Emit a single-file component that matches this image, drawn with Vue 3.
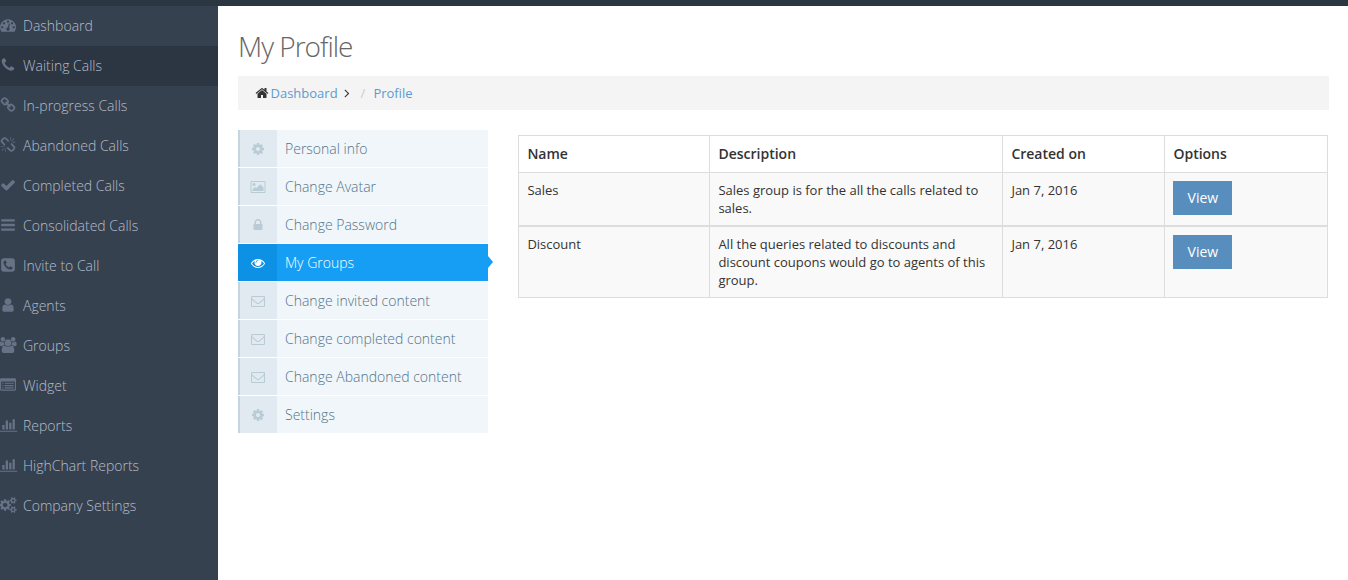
<script setup>
const icons = {
  dashboard: 'M384 1152q0-53-37.5-90.5t-90.5-37.5-90.5 37.5-37.5 90.5 37.5 90.5 90.5 37.5 90.5-37.5 37.5-90.5zm192-448q0-53-37.5-90.5t-90.5-37.5-90.5 37.5-37.5 90.5 37.5 90.5 90.5 37.5 90.5-37.5 37.5-90.5zm428 481l101-382q6-26-7.5-48.5t-38.5-29.5-48 6.5-30 39.5l-101 382q-60 5-107 43.5t-63 98.5q-20 77 20 146t117 89 146-20 89-117q16-60-6-117t-72-91zm660-33q0-53-37.5-90.5t-90.5-37.5-90.5 37.5-37.5 90.5 37.5 90.5 90.5 37.5 90.5-37.5 37.5-90.5zm-640-640q0-53-37.5-90.5t-90.5-37.5-90.5 37.5-37.5 90.5 37.5 90.5 90.5 37.5 90.5-37.5 37.5-90.5zm448 192q0-53-37.5-90.5t-90.5-37.5-90.5 37.5-37.5 90.5 37.5 90.5 90.5 37.5 90.5-37.5 37.5-90.5zm320 448q0 261-141 483-19 29-54 29h-1402q-35 0-54-29-141-221-141-483 0-182 71-348t191-286 286-191 348-71 348 71 286 191 191 286 71 348z',
  phone: 'M1600 1240q0 27-10 70.5t-21 68.5q-21 50-122 106-94 51-186 51-27 0-53-3.5t-57.5-12.5-47-14.5-55.5-20.5-49-18q-98-35-175-83-127-79-264-216t-216-264q-48-77-83-175-3-9-18-49t-20.5-55.5-14.5-47-12.5-57.5-3.5-53q0-92 51-186 56-101 106-122 25-11 68.5-21t70.5-10q14 0 21 3 18 6 53 76 11 19 30 54t35 63.5 31 53.5q3 4 17.5 25t21.5 35.5 7 28.5q0 20-28.5 50t-62 55-62 53-28.5 46q0 9 5 22.5t8.5 20.5 14 24 11.5 19q76 137 174 235t235 174q2 1 19 11.5t24 14 20.5 8.5 22.5 5q18 0 46-28.5t53-62 55-62 50-28.5q14 0 28.5 7t35.5 21.5 25 17.5q25 15 53.5 31t63.5 35 54 30q70 35 76 53 3 7 3 21z',
  chain: 'M1520 1216q0-40-28-68l-208-208q-28-28-68-28-42 0-72 32 3 3 19 18.5t21.5 21.5 15 19 13 25.5 3.5 27.5q0 40-28 68t-68 28q-15 0-27.5-3.5t-25.5-13-19-15-21.5-21.5-18.5-19q-33 31-33 73 0 40 28 68l206 207q27 27 68 27 40 0 68-26l147-146q28-28 28-67zm-703-705q0-40-28-68l-206-207q-28-28-68-28-39 0-68 27l-147 146q-28 28-28 67 0 40 28 68l208 208q27 27 68 27 42 0 72-31-3-3-19-18.5t-21.5-21.5-15-19-13-25.5-3.5-27.5q0-40 28-68t68-28q15 0 27.5 3.5t25.5 13 19 15 21.5 21.5 18.5 19q33-31 33-73zm895 705q0 120-85 203l-147 146q-83 83-203 83-121 0-204-85l-206-207q-83-83-83-203 0-123 88-209l-88-88q-86 88-208 88-120 0-204-84l-208-208q-84-84-84-204t85-203l147-146q83-83 203-83 121 0 204 85l206 207q83 83 83 203 0 123-88 209l88 88q86-88 208-88 120 0 204 84l208 208q84 84 84 204z',
  broken: 'M503 1271l-256 256q-10 9-23 9-12 0-23-9-9-10-9-23t9-23l256-256q10-9 23-9t23 9q9 10 9 23t-9 23zm169 41v320q0 14-9 23t-23 9-23-9-9-23v-320q0-14 9-23t23-9 23 9 9 23zm-224-224q0 14-9 23t-23 9h-320q-14 0-23-9t-9-23 9-23 23-9h320q14 0 23 9t9 23zm1264 128q0 120-85 203l-147 146q-83 83-203 83-121 0-204-85l-334-335q-21-21-42-56l239-18 273 274q28 28 68 28t68-27l147-146q28-28 28-67 0-40-28-68l-274-275 18-239q35 21 56 42l336 336q84 86 84 204zm-617-724l-239 18-273-274q-28-28-68-28-39 0-68 27l-147 146q-28 28-28 67 0 40 28 68l274 274-18 240q-35-21-56-42l-336-336q-84-86-84-204 0-120 85-203l147-146q83-83 203-83 121 0 204 85l334 335q21 21 42 56zm633 84q0 14-9 23t-23 9h-320q-14 0-23-9t-9-23 9-23 23-9h320q14 0 23 9t9 23zm-544-544v320q0 14-9 23t-23 9-23-9-9-23v-320q0-14 9-23t23-9 23 9 9 23zm407 151l-256 256q-11 9-23 9t-23-9q-9-10-9-23t9-23l256-256q10-9 23-9t23 9q9 10 9 23t-9 23z',
  check: 'M1671 566q0 40-28 68l-724 724-136 136q-28 28-68 28t-68-28l-136-136-362-362q-28-28-28-68t28-68l136-136q28-28 68-28t68 28l294 295 656-657q28-28 68-28t68 28l136 136q28 28 28 68z',
  bars: 'M1664 1344v128q0 26-19 45t-45 19h-1408q-26 0-45-19t-19-45v-128q0-26 19-45t45-19h1408q26 0 45 19t19 45zm0-512v128q0 26-19 45t-45 19h-1408q-26 0-45-19t-19-45v-128q0-26 19-45t45-19h1408q26 0 45 19t19 45zm0-512v128q0 26-19 45t-45 19h-1408q-26 0-45-19t-19-45v-128q0-26 19-45t45-19h1408q26 0 45 19t19 45z',
  phoneSquare: 'M1408 1193q0-11-2-16t-18-16.5-40.5-25-47.5-26.5-45.5-25-28.5-15q-5-3-19-13t-25-15-21-5q-15 0-36.5 20.5t-39.5 45-38.5 45-33.5 20.5q-7 0-16.5-3.5t-15.5-6.5-17-9.5-14-8.5q-99-55-170-126.5t-127-170.5q-2-3-8.5-14t-9.5-17-6.5-15.5-3.5-16.5q0-13 20.5-33.5t45-38.5 45-39.5 20.5-36.5q0-10-5-21t-15-25-13-19q-3-6-15-28.5t-25-45.5-26.5-47.5-25-40.5-16.5-18-16-2q-48 0-101 22-46 21-80 94.5t-34 130.5q0 16 2.5 34t5 30.5 9 33 10 29.5 12.5 33 11 30q60 164 216.5 320.5t320.5 216.5q6 2 30 11t33 12.5 29.5 10 33 9 30.5 5 34 2.5q57 0 130.5-34t94.5-80q22-53 22-101zm256-777v960q0 119-84.5 203.5t-203.5 84.5h-960q-119 0-203.5-84.5t-84.5-203.5v-960q0-119 84.5-203.5t203.5-84.5h960q119 0 203.5 84.5t84.5 203.5z',
  user: 'M1536 1399q0 109-62.5 187t-150.5 78h-854q-88 0-150.5-78t-62.5-187q0-85 8.5-160.5t31.5-152 58.5-131 94-89 134.5-34.5q131 128 313 128t313-128q76 0 134.5 34.5t94 89 58.5 131 31.5 152 8.5 160.5zm-256-887q0 159-112.5 271.5t-271.5 112.5-271.5-112.5-112.5-271.5 112.5-271.5 271.5-112.5 271.5 112.5 112.5 271.5z',
  users: 'M529 896q-162 5-265 128h-134q-82 0-138-40.5t-56-118.5q0-353 124-353 6 0 43.5 21t97.5 42.5 119 21.5q67 0 133-23-5 37-5 66 0 159 90 256zm1071 637q0 120-73 189.5t-194 69.5h-874q-121 0-194-69.5t-73-189.5q0-53 3.5-103.5t14-109 26.5-108.5 43-97.5 62-81 85.5-53.5 111.5-20q10 0 43 21.5t73 48 107 48 135 21.5 135-21.5 107-48 73-48 43-21.5q61 0 111.5 20t85.5 53.5 62 81 43 97.5 26.5 108.5 14 109 3.5 103.5zm-1024-1277q0 106-75 181t-181 75-181-75-75-181 75-181 181-75 181 75 75 181zm704 384q0 159-112.5 271.5t-271.5 112.5-271.5-112.5-112.5-271.5 112.5-271.5 271.5-112.5 271.5 112.5 112.5 271.5zm576 225q0 78-56 118.5t-138 40.5h-134q-103-123-265-128 90-97 90-256 0-29-5-66 66 23 133 23 59 0 119-21.5t97.5-42.5 43.5-21q124 0 124 353zm-128-609q0 106-75 181t-181 75-181-75-75-181 75-181 181-75 181 75 75 181z',
  listAlt: 'M256 1152h128v128h-128zM256 896h128v128h-128zM256 640h128v128h-128zM512 1152h1024v128h-1024zM512 896h1024v128h-1024zM512 640h1024v128h-1024zM1664 1376v-832q0-13-9.5-22.5t-22.5-9.5h-1472q-13 0-22.5 9.5t-9.5 22.5v832q0 13 9.5 22.5t22.5 9.5h1472q13 0 22.5-9.5t9.5-22.5zM1792 288v1088q0 66-47 113t-113 47h-1472q-66 0-113-47t-47-113v-1088q0-66 47-113t113-47h1472q66 0 113 47t47 113z',
  chart: 'M512 896v512h-256v-512h256zm384-512v1024h-256v-1024h256zm1024 1152v128h-2048v-1536h128v1408h1920zm-640-896v768h-256v-768h256zm384-384v1152h-256v-1152h256z',
  cogs: 'M832 896q0-106-75-181t-181-75-181 75-75 181 75 181 181 75 181-75 75-181zm768 512q0-52-38-90t-90-38-90 38-38 90q0 53 37.5 90.5t90.5 37.5 90.5-37.5 37.5-90.5zm0-1024q0-52-38-90t-90-38-90 38-38 90q0 53 37.5 90.5t90.5 37.5 90.5-37.5 37.5-90.5zm-384 421v185q0 10-7 19.5t-16 10.5l-155 24q-11 35-32 76 34 48 90 115 7 11 7 20 0 12-7 19-23 30-82.5 89.5t-78.5 59.5q-11 0-21-7l-115-90q-37 19-77 31-11 108-23 155-7 24-30 24h-186q-11 0-20-7.5t-10-17.5l-23-153q-34-10-75-31l-118 89q-7 7-20 7-11 0-21-8-144-133-144-160 0-9 7-19 10-14 41-53t47-61q-23-44-35-82l-152-24q-10-1-17-9.5t-7-19.5v-185q0-10 7-19.5t16-10.5l155-24q11-35 32-76-34-48-90-115-7-11-7-20 0-12 7-20 22-30 82-89t79-59q11 0 21 7l115 90q34-18 77-32 11-108 23-154 7-24 30-24h186q11 0 20 7.5t10 17.5l23 153q34 10 75 31l118-89q8-7 20-7 11 0 21 8 144 133 144 160 0 8-7 19-12 16-42 54t-45 60q23 48 34 82l152 23q10 2 17 10.5t7 19.5zm640 533v140q0 16-149 31-12 27-30 52 51 113 51 138 0 4-4 7-122 71-124 71-8 0-46-47t-52-68q-20 2-30 2t-30-2q-14 21-52 68t-46 47q-2 0-124-71-4-3-4-7 0-25 51-138-18-25-30-52-149-15-149-31v-140q0-16 149-31 13-29 30-52-51-113-51-138 0-4 4-7 4-2 35-20t59-34 30-16q8 0 46 46.5t52 67.5q20-2 30-2t30 2q51-71 92-112l6-2q4 0 124 70 4 3 4 7 0 25-51 138 17 23 30 52 149 15 149 31zm0-1024v140q0 16-149 31-12 27-30 52 51 113 51 138 0 4-4 7-122 71-124 71-8 0-46-47t-52-68q-20 2-30 2t-30-2q-14 21-52 68t-46 47q-2 0-124-71-4-3-4-7 0-25 51-138-18-25-30-52-149-15-149-31v-140q0-16 149-31 13-29 30-52-51-113-51-138 0-4 4-7 4-2 35-20t59-34 30-16q8 0 46 46.5t52 67.5q20-2 30-2t30 2q51-71 92-112l6-2q4 0 124 70 4 3 4 7 0 25-51 138 17 23 30 52 149 15 149 31z',
  cog: 'M1152 896q0-106-75-181t-181-75-181 75-75 181 75 181 181 75 181-75 75-181zm512-109v222q0 12-8 23t-20 13l-185 28q-19 54-39 91 35 50 107 138 10 12 10 25t-9 23q-27 37-99 108t-94 71q-12 0-26-9l-138-108q-44 23-91 38-16 136-29 186-7 28-36 28h-222q-14 0-24.5-8.5t-11.5-21.5l-28-184q-49-16-90-37l-141 107q-10 9-25 9-14 0-25-11-126-114-165-168-7-10-7-23 0-12 8-23 15-21 51-66.5t54-70.5q-27-50-41-99l-183-27q-13-2-21-12.5t-8-23.5v-222q0-12 8-23t19-13l186-28q14-46 39-92-40-57-107-138-10-12-10-24 0-10 9-23 26-36 98.5-107.5t94.5-71.5q13 0 26 10l138 107q44-23 91-38 16-136 29-186 7-28 36-28h222q14 0 24.5 8.5t11.5 21.5l28 184q49 16 90 37l142-107q9-9 24-9 13 0 25 10 129 119 165 170 7 8 7 22 0 12-8 23-15 21-51 66.5t-54 70.5q26 50 41 98l183 28q13 2 21 12.5t8 23.5z',
  picture: 'M576 576q0 80-56 136t-136 56-136-56-56-136 56-136 136-56 136 56 56 136zm1024 384v448h-1408v-192l320-320 160 160 512-512zm96-704h-1600q-13 0-22.5 9.5t-9.5 22.5v1216q0 13 9.5 22.5t22.5 9.5h1600q13 0 22.5-9.5t9.5-22.5v-1216q0-13-9.5-22.5t-22.5-9.5zm160 32v1216q0 66-47 113t-113 47h-1600q-66 0-113-47t-47-113v-1216q0-66 47-113t113-47h1600q66 0 113 47t47 113z',
  lock: 'M640 768h512v-192q0-106-75-181t-181-75-181 75-75 181v192zm832 96v576q0 40-28 68t-68 28h-960q-40 0-68-28t-28-68v-576q0-40 28-68t68-28h32v-192q0-184 132-316t316-132 316 132 132 316v192h32q40 0 68 28t28 68z',
  eye: 'M1664 960q-152-236-381-353 61 104 61 225 0 185-131.5 316.5t-316.5 131.5-316.5-131.5-131.5-316.5q0-121 61-225-229 117-381 353 133 205 333.5 326.5t434.5 121.5 434.5-121.5 333.5-326.5zm-720-384q0-20-14-34t-34-14q-125 0-214.5 89.5t-89.5 214.5q0 20 14 34t34 14 34-14 14-34q0-86 61-147t147-61q20 0 34-14t14-34zm848 384q0 34-20 69-140 230-376.5 368.5t-499.5 138.5-499.5-139-376.5-368q-20-35-20-69t20-69q140-229 376.5-368t499.5-139 499.5 139 376.5 368q20 35 20 69z',
  envelope: 'M1664 1504v-768q-32 36-69 66-268 206-426 338-51 43-83 67t-86.5 48.5-102.5 24.5h-2q-48 0-102.5-24.5t-86.5-48.5-83-67q-158-132-426-338-37-30-69-66v768q0 13 9.5 22.5t22.5 9.5h1472q13 0 22.5-9.5t9.5-22.5zm0-1051v-24.5t-.5-13-3-12.5-5.5-9-9-7.5-14-2.5h-1472q-13 0-22.5 9.5t-9.5 22.5q0 168 147 284 193 152 401 317 6 5 35 29.5t46 37.5 44.5 31.5 50.5 27.5 43 9h2q20 0 43-9t50.5-27.5 44.5-31.5 46-37.5 35-29.5q208-165 401-317 54-43 100.5-115.5t46.5-131.5zm128-37v1088q0 66-47 113t-113 47h-1472q-66 0-113-47t-47-113v-1088q0-66 47-113t113-47h1472q66 0 113 47t47 113z',
  home: 'M1472 992v480q0 26-19 45t-45 19h-384v-384h-256v384h-384q-26 0-45-19t-19-45v-480q0-1 .5-3t.5-3l575-474 575 474q1 2 1 6zm223-69l-62 74q-8 9-21 11h-3q-13 0-21-7l-692-577-692 577q-12 8-24 7-13-2-21-11l-62-74q-8-10-7-23.5t11-21.5l719-599q32-26 76-26t76 26l244 204v-195q0-14 9-23t23-9h192q14 0 23 9t9 23v408l219 182q10 8 11 21.5t-7 23.5z',
  angle: 'M1171 960q0 13-10 23l-466 466q-10 10-23 10t-23-10l-50-50q-10-10-10-23t10-23l393-393-393-393q-10-10-10-23t10-23l50-50q10-10 23-10t23 10l466 466q10 10 10 23z',
}

const navItems = [
  { label: 'Dashboard', icon: 'dashboard' },
  { label: 'Waiting Calls', icon: 'phone', current: true },
  { label: 'In-progress Calls', icon: 'chain' },
  { label: 'Abandoned Calls', icon: 'broken' },
  { label: 'Completed Calls', icon: 'check' },
  { label: 'Consolidated Calls', icon: 'bars' },
  { label: 'Invite to Call', icon: 'phoneSquare' },
  { label: 'Agents', icon: 'user' },
  { label: 'Groups', icon: 'users' },
  { label: 'Widget', icon: 'listAlt' },
  { label: 'Reports', icon: 'chart' },
  { label: 'HighChart Reports', icon: 'chart' },
  { label: 'Company Settings', icon: 'cogs' },
]

const tabs = [
  { label: 'Personal info', icon: 'cog' },
  { label: 'Change Avatar', icon: 'picture' },
  { label: 'Change Password', icon: 'lock' },
  { label: 'My Groups', icon: 'eye', active: true },
  { label: 'Change invited content', icon: 'envelope' },
  { label: 'Change completed content', icon: 'envelope' },
  { label: 'Change Abandoned content', icon: 'envelope' },
  { label: 'Settings', icon: 'cog' },
]

const groups = [
  { name: 'Sales', description: 'Sales group is for the all the calls related to sales.', created: 'Jan 7, 2016' },
  { name: 'Discount', description: 'All the queries related to discounts and discount coupons would go to agents of this group.', created: 'Jan 7, 2016' },
]
</script>

<template>
  <div class="page">
    <header class="topbar"></header>
    <div class="body">
      <nav class="sidebar">
        <a v-for="item in navItems" :key="item.label" class="nav-item" :class="{ current: item.current }">
          <svg class="nav-icon" viewBox="0 0 1792 1792"><path :d="icons[item.icon]" /></svg>
          <span>{{ item.label }}</span>
        </a>
      </nav>
      <main class="content">
        <h1 class="title">My Profile</h1>
        <div class="breadcrumb">
          <svg class="home" viewBox="0 0 1792 1792"><path :d="icons.home" /></svg>
          <a class="link">Dashboard</a>
          <svg class="angle" viewBox="0 0 1792 1792"><path :d="icons.angle" /></svg>
          <span class="slash">/</span>
          <a class="link">Profile</a>
        </div>
        <div class="columns">
          <ul class="tabs">
            <li v-for="tab in tabs" :key="tab.label" class="tab" :class="{ active: tab.active }">
              <span class="tab-icon"><svg viewBox="0 0 1792 1792"><path :d="icons[tab.icon]" /></svg></span>
              <span class="tab-label">{{ tab.label }}</span>
            </li>
          </ul>
          <table class="groups">
            <colgroup>
              <col class="c-name" /><col class="c-desc" /><col class="c-date" /><col class="c-opt" />
            </colgroup>
            <thead>
              <tr><th>Name</th><th>Description</th><th>Created on</th><th>Options</th></tr>
            </thead>
            <tbody>
              <tr v-for="group in groups" :key="group.name">
                <td>{{ group.name }}</td>
                <td>{{ group.description }}</td>
                <td>{{ group.created }}</td>
                <td><div class="action"><button class="view">View</button></div></td>
              </tr>
            </tbody>
          </table>
        </div>
      </main>
    </div>
  </div>
</template>

<style>
body {
  margin: 0;
  overflow: hidden;
}
</style>

<style scoped>
.page {
  display: flex;
  flex-direction: column;
  height: 580px;
  box-sizing: border-box;
  font-family: 'Open Sans', 'Liberation Sans', sans-serif;
  font-size: 13px;
  line-height: 18px;
  color: #333;
  background: #fff;
}
svg {
  display: block;
  fill: currentColor;
  overflow: visible;
  flex: none;
}
.topbar {
  flex: none;
  height: 6px;
  background: #2b3643;
}
.body {
  display: flex;
  flex: 1;
}
.sidebar {
  flex: none;
  width: 218px;
  background: #364150;
}
.nav-item {
  display: flex;
  align-items: center;
  gap: 7px;
  height: 39px;
  padding-bottom: 1px;
  font-size: 14px;
  font-weight: 300;
  color: #b4bcc8;
}
.nav-item.current {
  background: #2c3542;
}
.nav-icon {
  width: 16px;
  height: 16px;
  margin-bottom: 1px;
  color: #667285;
}
.content {
  flex: 1;
  padding: 25px 19px 0 20px;
}
.title {
  margin: 0 0 15px;
  font-size: 28px;
  line-height: 30px;
  font-weight: 300;
  letter-spacing: -1px;
  color: #666;
}
.breadcrumb {
  display: flex;
  align-items: center;
  height: 34px;
  padding-left: 16.5px;
  background: #f4f4f4;
}
.home {
  width: 14px;
  height: 14px;
  margin-right: 2px;
}
.link {
  color: #5b9bd1;
}
.angle {
  width: 14px;
  height: 14px;
  margin-left: 2px;
}
.slash {
  padding: 0 8px 0 7px;
  color: #ccc;
}
.columns {
  display: flex;
  align-items: flex-start;
  gap: 30px;
  margin-top: 20px;
}
.tabs {
  flex: none;
  display: flex;
  flex-direction: column;
  gap: 1px;
  width: 250px;
  margin: 0;
  padding: 0;
  list-style: none;
}
.tab {
  position: relative;
  display: flex;
  height: 37px;
  box-sizing: border-box;
  border-left: 2px solid #c4d5df;
  background: #f0f6fa;
  font-size: 14px;
  font-weight: 300;
  color: #557386;
}
.tab-icon {
  display: flex;
  align-items: center;
  justify-content: center;
  width: 37px;
  padding: 1px 2px 0 0;
  box-sizing: border-box;
  background: #e0eaf0;
  color: #b9cbd5;
}
.tab-icon svg {
  width: 14px;
  height: 14px;
}
.tab-label {
  padding-left: 8px;
  line-height: 37px;
}
.tab.active {
  border-left-color: #0c91e5;
  background: #169ef4;
  color: #fff;
}
.tab.active .tab-icon {
  background: #0c91e5;
  color: #fff;
}
.tab.active::after {
  content: '';
  position: absolute;
  left: 100%;
  top: 12px;
  border: 6px solid transparent;
  border-left: 5px solid #169ef4;
  border-right: 0;
}
.groups {
  width: 810px;
  margin-top: 5px;
  table-layout: fixed;
  border-collapse: separate;
  border-spacing: 0;
  border-top: 1px solid #ddd;
  border-left: 1px solid #ddd;
}
.c-name { width: 191px; }
.c-desc { width: 293px; }
.c-date { width: 162px; }
.c-opt { width: 163px; }
th,
td {
  padding: 8px 8px 8px 8.4px;
  border-right: 1px solid #ddd;
  border-bottom: 1px solid #ddd;
  text-align: left;
  vertical-align: top;
}
th {
  font-size: 14px;
  line-height: 20px;
  font-weight: 600;
}
td {
  background: #f9f9f9;
}
tbody tr:first-child td {
  border-bottom-width: 2px;
}
.action {
  display: flex;
}
.view {
  width: 59px;
  height: 34px;
  padding: 0;
  border: 0;
  background: #578ebe;
  color: #fff;
  font-family: inherit;
  font-size: 14px;
  line-height: 20px;
}
</style>
